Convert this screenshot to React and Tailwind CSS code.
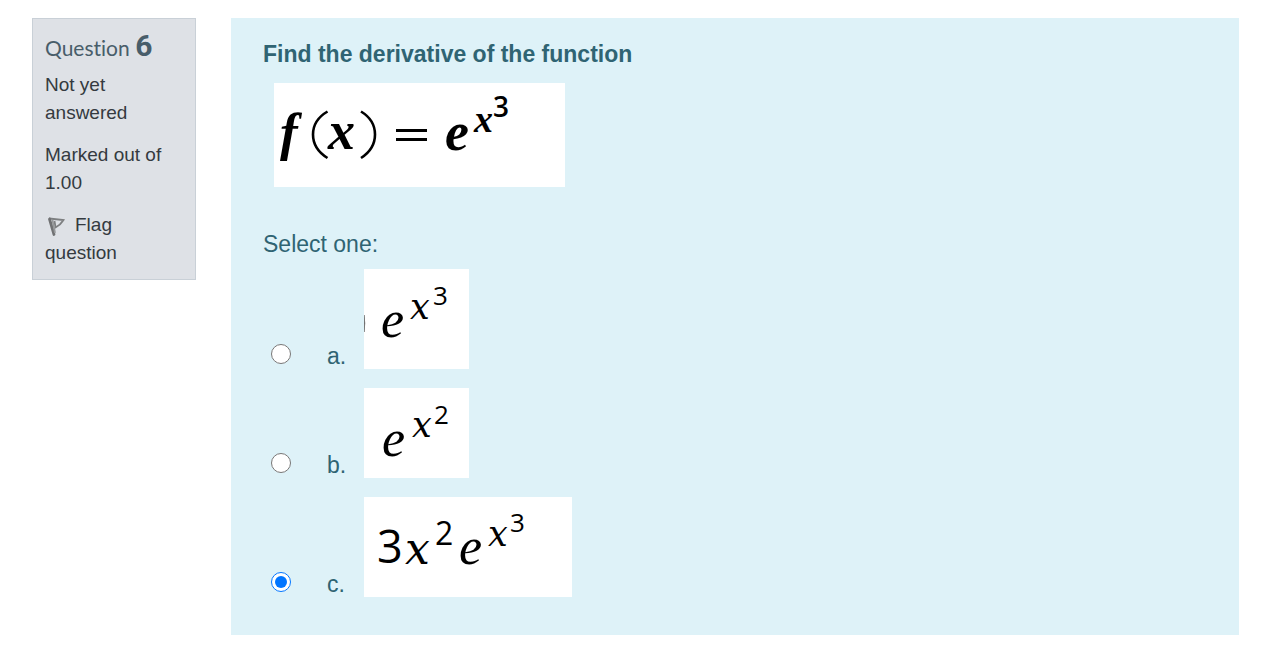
import { useState } from "react";

function Picture({ width, height, label, children }) {
  return (
    <svg
      role="img"
      aria-label={label}
      width={width}
      height={height}
      viewBox={`0 0 ${width} ${height}`}
      className="block shrink-0 bg-white text-black"
      fill="currentColor"
    >
      {children}
    </svg>
  );
}

const letter = "font-['Liberation_Serif',serif] italic";
const variable = "font-['DejaVu_Serif',serif] italic";
const digit = "font-['Open_Sans',sans-serif]";

function FunctionFormula() {
  return (
    <Picture width={291} height={104} label="f(x) = e^(x^3)">
      <text x="6" y="67" fontSize="53" className={`${letter} font-bold`}>f</text>
      <path d="M53.5 28.5Q39 37 39 51.5T53.5 75" fill="none" stroke="currentColor" strokeWidth="2.6" />
      <text x="54" y="66" fontSize="54" className={`${letter} font-bold`}>x</text>
      <path d="M87 28.5Q101 37 101 51.5T87 75" fill="none" stroke="currentColor" strokeWidth="2.6" />
      <path d="M122 47.5h31M122 56.5h31" stroke="currentColor" strokeWidth="3.2" />
      <text x="171" y="67" fontSize="54" className={`${letter} font-bold`}>e</text>
      <text x="200" y="49" fontSize="38" className={`${letter} font-bold`}>x</text>
      <text x="219" y="34" fontSize="28" className={`${digit} font-semibold`}>3</text>
    </Picture>
  );
}

function AnswerA() {
  return (
    <Picture width={105} height={100} label="e^(x^3)">
      <path d="M0 46q1.500 8 0 17z" stroke="#777" strokeWidth="1" />
      <text x="17" y="68" fontSize="52" className={letter}>e</text>
      <text x="46" y="50" fontSize="35" className={variable}>x</text>
      <text x="69" y="36" fontSize="26" className={digit}>3</text>
    </Picture>
  );
}

function AnswerB() {
  return (
    <Picture width={105} height={90} label="e^(x^2)">
      <text x="18" y="68" fontSize="52" className={letter}>e</text>
      <text x="48" y="49" fontSize="35" className={variable}>x</text>
      <text x="70" y="36" fontSize="26" className={digit}>2</text>
    </Picture>
  );
}

function AnswerC() {
  return (
    <Picture width={208} height={100} label="3x^2 e^(x^3)">
      <text x="13" y="66" fontSize="45" className={digit}>3</text>
      <text x="41" y="67" fontSize="44" className={variable}>x</text>
      <text x="71" y="48" fontSize="32" className={digit}>2</text>
      <text x="95" y="67" fontSize="52" className={letter}>e</text>
      <text x="124" y="49" fontSize="35" className={variable}>x</text>
      <text x="146" y="35" fontSize="26" className={digit}>3</text>
    </Picture>
  );
}

const answers = [
  { id: "a", Formula: AnswerA },
  { id: "b", Formula: AnswerB },
  { id: "c", Formula: AnswerC },
];

function FlagIcon() {
  return (
    <svg aria-hidden="true" viewBox="0 0 22 22" className="mr-2 inline-block size-[22px]" fill="none">
      <path d="M4 3.500L18.500 5Q15.500 10 10.500 12.500L9.500 6" stroke="#7d7f81" strokeWidth="1.800" />
      <path d="M4.500 4L9 19.500" stroke="#707173" strokeWidth="2.800" strokeLinecap="round" />
      <path d="M7.500 5L10 18" stroke="#96989a" strokeWidth="1.800" />
    </svg>
  );
}

export default function App() {
  const [selected, setSelected] = useState("c");
  return (
    <main className="flex items-start gap-[35px] bg-white pt-[18px] pr-[29px] pb-5 pl-8 font-['Liberation_Sans',sans-serif]">
      <aside className="w-[164px] shrink-0 border border-[#c9d0d7] bg-[#dee1e6] p-3 text-[19px] leading-7 text-[#343a40]">
        <h3 className="mb-2 font-['Lato',sans-serif] text-[21px] leading-[30px] text-[#485d6a] [font-variant-ligatures:none]">
          Question <span className="font-['Roboto',sans-serif] text-[30px] font-bold">6</span>
        </h3>
        <div className="mb-3.5">Not yet answered</div>
        <div className="mb-3.5">Marked out of 1.00</div>
        <button type="button" className="block text-left">
          <FlagIcon />Flag question
        </button>
      </aside>

      <section className="min-w-0 flex-1 bg-[#def2f8] px-8 pt-[18px] pb-[38px] text-[23px] leading-9 text-[#2f6473]">
        <p className="font-bold">Find the derivative of the function</p>
        <div className="mt-[11px] ml-[11px]">
          <FunctionFormula />
        </div>
        <fieldset className="mt-[39px]">
          <legend className="mb-[7px]">Select one:</legend>
          <div className="flex flex-col gap-[19px]">
            {answers.map(({ id, Formula }) => (
              <div key={id} className="flex items-end pl-2">
                <input
                  type="radio"
                  name="answer"
                  id={`answer-${id}`}
                  checked={selected === id}
                  onChange={() => setSelected(id)}
                  className="mb-[5px] size-5 shrink-0 accent-[#0075ff]"
                />
                <label htmlFor={`answer-${id}`} className="ml-9 flex items-end">
                  <span className="-mb-[5px] w-[37px]">{id}.</span>
                  <Formula />
                </label>
              </div>
            ))}
          </div>
        </fieldset>
      </section>
    </main>
  );
}
